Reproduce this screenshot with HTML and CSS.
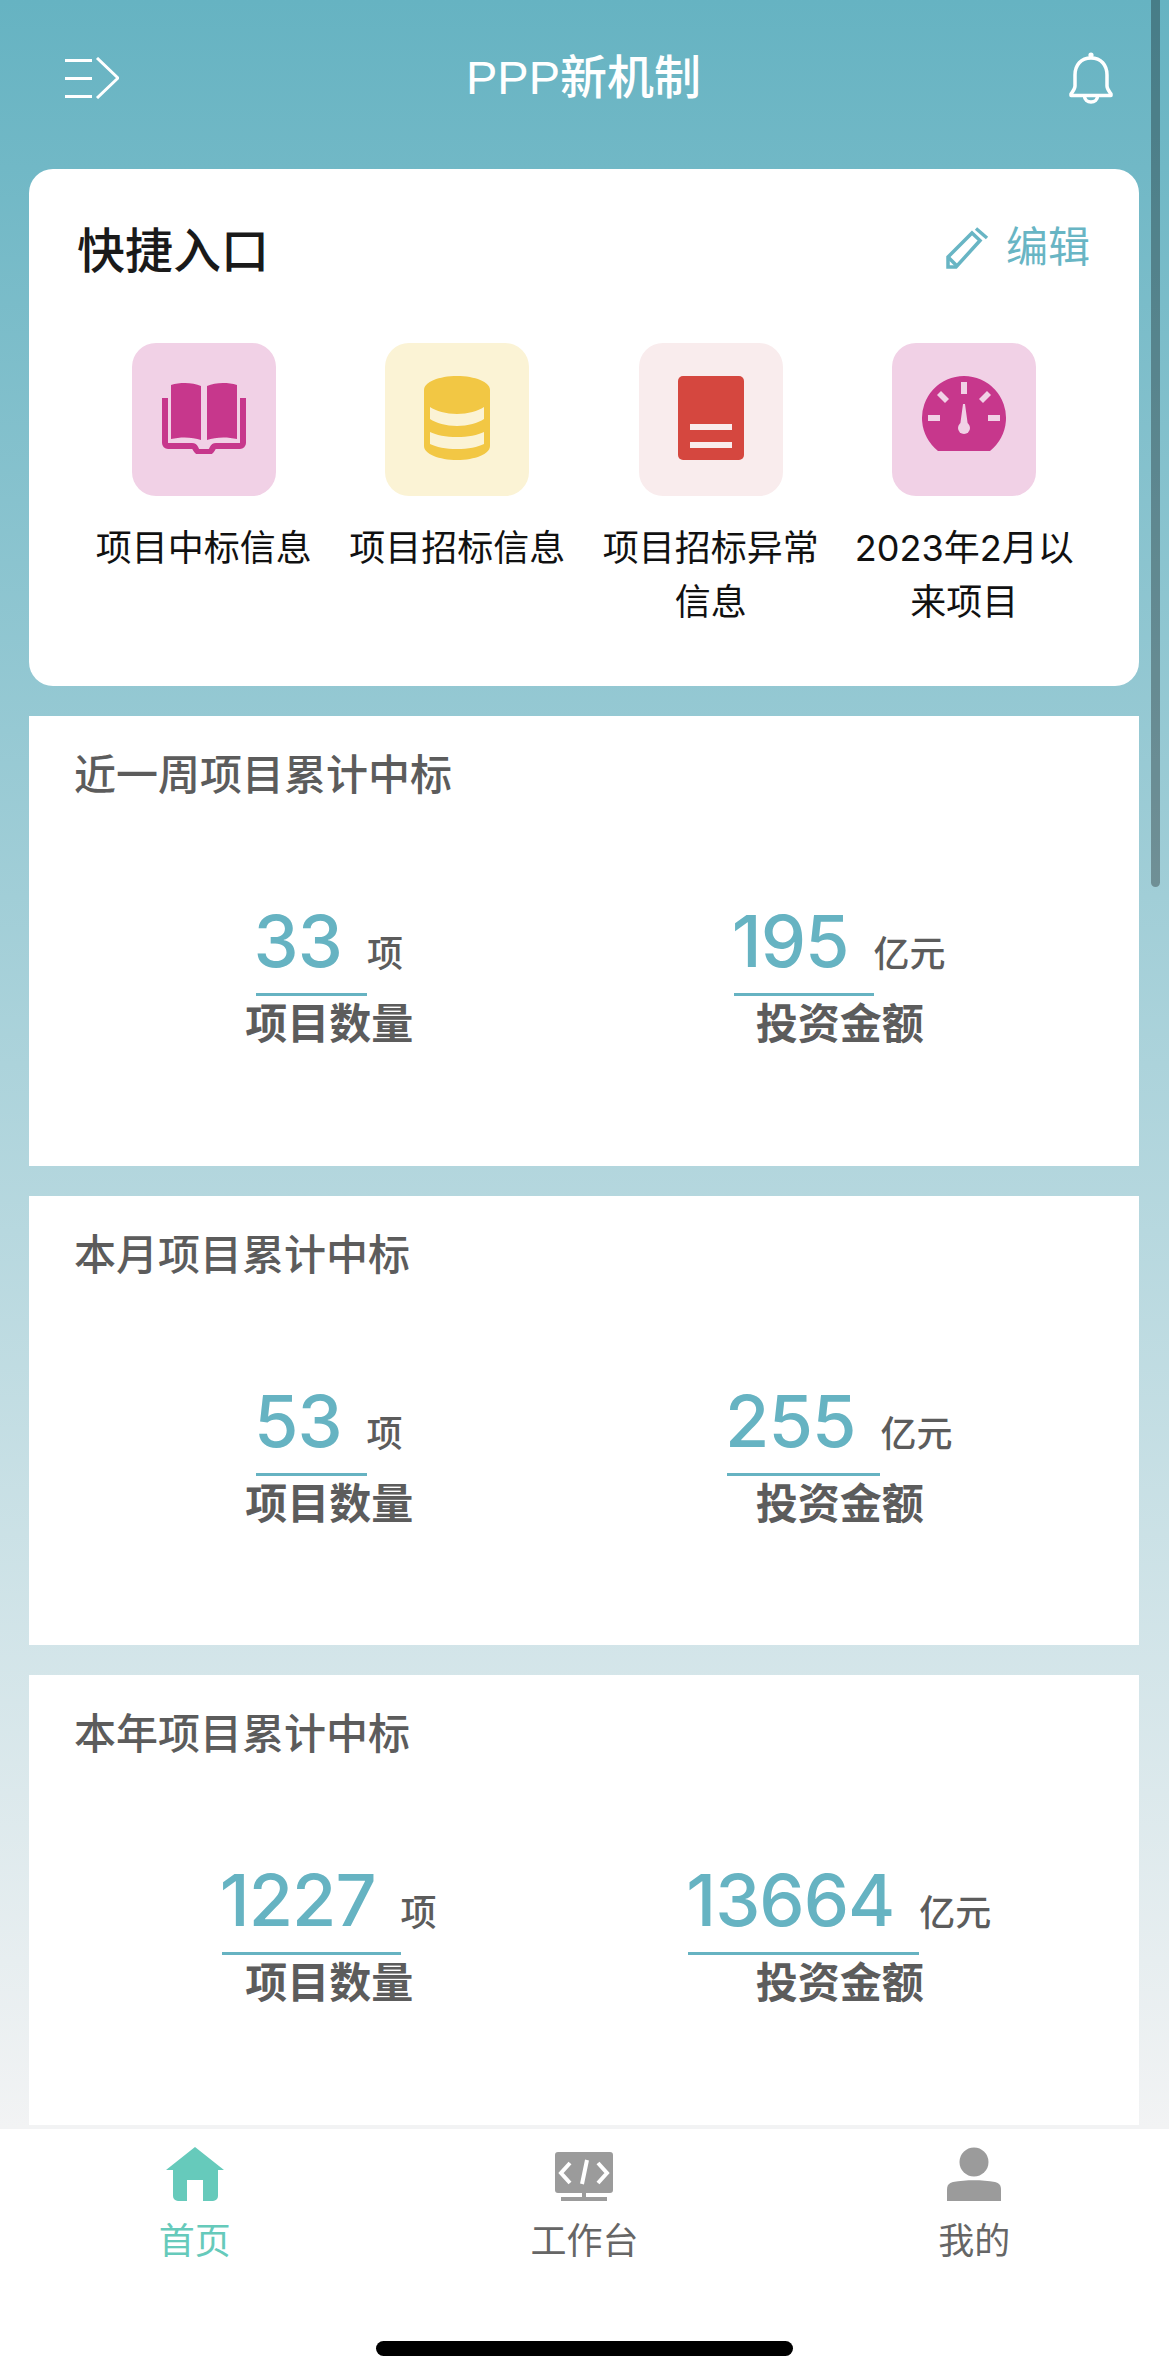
FILE: index.html
```html
<!DOCTYPE html>
<html lang="zh-CN">

<head>
    <meta charset="UTF-8">
    <meta name="viewport" content="width=device-width, initial-scale=1.0">
    <title>PPP新机制</title>
    <link rel="stylesheet" href="styles.css">
</head>

<body>
    <div class="scroll-thumb"></div>

    <!-- Cabeçalho -->
    <header class="top-bar">
        <svg class="menu-icon" viewBox="0 0 54 42" fill="none" stroke="#fff" stroke-width="3">
            <path d="M0 3.5h27M0 21.5h27M0 39.5h27" />
            <path d="M32 1l21 20-21 20" />
        </svg>
        <h1 class="app-title">PPP新机制</h1>
        <svg class="bell-icon" viewBox="0 0 44 52" fill="none" stroke="#fff" stroke-width="3.5" stroke-linejoin="round">
            <circle cx="22" cy="3.2" r="1.6" fill="#fff" stroke-width="2" />
            <path d="M22 6C12 6 6 13 6 23v11c0 3-2 5-4 8v1.500h40V42c-2-3-4-5-4-8V23C38 13 32 6 22 6z" />
            <path d="M15.500 44c0 4 3 6 6.500 6s6.500-2 6.500-6" />
        </svg>
    </header>

    <!-- Conteúdo -->
    <main class="content">
        <section class="quick-card">
            <div class="quick-head">
                <h2 class="quick-title">快捷入口</h2>
                <a class="edit-link">
                    <svg class="edit-icon" viewBox="0 0 43 42" fill="none" stroke="#68b5c4" stroke-width="3.5">
                        <path d="M2 40V30L26 6l8 7.500L10 40z" />
                        <path d="M2 30l9 9" />
                        <path d="M30 1.500L41 11" />
                    </svg>
                    编辑
                </a>
            </div>
            <div class="quick-grid">
                <a class="quick-item">
                    <span class="tile tile-pink">
                        <svg width="84" height="72" viewBox="0 0 84 72" fill="#c7378c">
                            <path d="M9 3c10-3 22-2.500 30 1v54c-8-3-20-3.500-30-1z" />
                            <path d="M75 3c-10-3-22-2.500-30 1v54c8-3 20-3.500 30-1z" />
                            <path d="M3 16v45a3 3 0 0 0 3 3h24c3 0 3 1.500 4 3.500s2 2.500 4 2.500h8c2 0 3-.5 4-2.500s1-3.500 4-3.500h24a3 3 0 0 0 3-3V16" fill="none" stroke="#c7378c" stroke-width="6" />
                        </svg>
                    </span>
                    <span class="quick-label">项目中标信息</span>
                </a>
                <a class="quick-item">
                    <span class="tile tile-yellow">
                        <svg width="66" height="84" viewBox="0 0 66 84">
                            <path fill="#f2c744" d="M0 14C0 6 15 0 33 0s33 6 33 14v56c0 8-15 14-33 14S0 78 0 70z" />
                            <path fill="#fbf3d5" d="M6 31c6 4 16 7 27 7s21-3 27-7v12c-6 4-16 7-27 7S12 47 6 43z" />
                            <path fill="#fbf3d5" d="M6 56c6 3 16 5 27 5s21-2 27-5v12c-6 3-16 5-27 5S12 71 6 68z" />
                        </svg>
                    </span>
                    <span class="quick-label">项目招标信息</span>
                </a>
                <a class="quick-item">
                    <span class="tile tile-red">
                        <svg width="66" height="84" viewBox="0 0 66 84">
                            <rect width="66" height="84" rx="5" fill="#d5473f" />
                            <path fill="#f9eced" d="M12 48h42v6H12zM12 66h42v6H12z" />
                        </svg>
                    </span>
                    <span class="quick-label">项目招标异常信息</span>
                </a>
                <a class="quick-item">
                    <span class="tile tile-pink">
                        <svg width="84" height="84" viewBox="0 0 84 84">
                            <path fill="#c7378c" d="M16 75A42 42 0 1 1 68 75z" />
                            <path fill="#f1d1e6" d="M39 6h6v12h-6zM6 39h12v6H6zM66 39h12v6H66zM41 28h2l3 22h-8z" />
                            <path fill="#f1d1e6" d="M19 15l-4 4 8 8 4-4zM65 15l4 4-8 8-4-4z" />
                            <circle cx="42" cy="52" r="6" fill="#f1d1e6" />
                        </svg>
                    </span>
                    <span class="quick-label">2023年2月以来项目</span>
                </a>
            </div>
        </section>

        <section class="stat-card">
            <h3 class="stat-title">近一周项目累计中标</h3>
            <div class="stat-row">
                <div class="stat">
                    <div class="stat-value"><span class="num">33</span><span class="unit">项</span></div>
                    <div class="stat-label">项目数量</div>
                </div>
                <div class="stat">
                    <div class="stat-value"><span class="num">195</span><span class="unit">亿元</span></div>
                    <div class="stat-label">投资金额</div>
                </div>
            </div>
        </section>

        <section class="stat-card">
            <h3 class="stat-title">本月项目累计中标</h3>
            <div class="stat-row">
                <div class="stat">
                    <div class="stat-value"><span class="num">53</span><span class="unit">项</span></div>
                    <div class="stat-label">项目数量</div>
                </div>
                <div class="stat">
                    <div class="stat-value"><span class="num">255</span><span class="unit">亿元</span></div>
                    <div class="stat-label">投资金额</div>
                </div>
            </div>
        </section>

        <section class="stat-card">
            <h3 class="stat-title">本年项目累计中标</h3>
            <div class="stat-row">
                <div class="stat">
                    <div class="stat-value"><span class="num">1227</span><span class="unit">项</span></div>
                    <div class="stat-label">项目数量</div>
                </div>
                <div class="stat">
                    <div class="stat-value"><span class="num">13664</span><span class="unit">亿元</span></div>
                    <div class="stat-label">投资金额</div>
                </div>
            </div>
        </section>
    </main>

    <!-- Rodapé -->
    <footer class="tab-bar">
        <nav class="tabs">
            <a class="tab active">
                <svg class="tab-icon" width="58" height="54" viewBox="0 0 58 54">
                    <path fill="#66cabb" d="M29 0l29 23h-6v26a5 5 0 0 1-5 5H37V33H21v21H12a5 5 0 0 1-5-5V23H0z" />
                </svg>
                首页
            </a>
            <a class="tab">
                <svg class="tab-icon" width="58" height="54" viewBox="0 0 58 54">
                    <path fill="#9b9b9b" d="M3 5h52a3 3 0 0 1 3 3v35a3 3 0 0 1-3 3H31v4h21v4H6v-4h21v-4H3a3 3 0 0 1-3-3V8a3 3 0 0 1 3-3z" />
                    <path fill="none" stroke="#fff" stroke-width="4" d="M15 16l-9 10 9 10M43 16l9 10-9 10M32 13l-5 24" />
                </svg>
                工作台
            </a>
            <a class="tab">
                <svg class="tab-icon" width="58" height="54" viewBox="0 0 58 54">
                    <circle cx="29" cy="15" r="14.500" fill="#9b9b9b" />
                    <path fill="#9b9b9b" d="M2 43c0-5 2-7 6-8 13-2.500 29-2.500 42 0 4 1 6 3 6 8v11H2z" />
                </svg>
                我的
            </a>
        </nav>
        <div class="home-indicator"></div>
    </footer>
</body>

</html>
```

FILE: styles.css
```css
/* Reset básico */
* {
    margin: 0;
    padding: 0;
    box-sizing: border-box;
    font-family: "Liberation Sans", "Noto Sans CJK SC", sans-serif;
}

:root {
    --teal: #66b3c2;
    --tab-green: #66cabb;
    --text-dark: #1a1a1a;
    --text-gray: #5c5c5c;
}

html,
body {
    height: 2379px;
    overflow: hidden;
}

body {
    position: relative;
    display: flex;
    flex-direction: column;
    background: linear-gradient(180deg, #66b3c2 0, #f2f3f4 2128px);
}

.scroll-thumb {
    position: absolute;
    top: -8px;
    right: 9px;
    width: 9px;
    height: 895px;
    background-color: rgba(0, 0, 0, 0.3);
    border-radius: 5px;
}

/* Cabeçalho */
.top-bar {
    height: 169px;
    padding: 52px 56px 0 65px;
    display: flex;
    justify-content: space-between;
    align-items: flex-start;
    position: relative;
}

.menu-icon {
    width: 54px;
    height: 42px;
    margin-top: 5px;
}

.bell-icon {
    width: 44px;
    height: 52px;
}

.app-title {
    position: absolute;
    left: 0;
    right: 2px;
    top: 50px;
    text-align: center;
    color: #fff;
    font-size: 47px;
    line-height: 56px;
    font-weight: 500;
}

/* Conteúdo Principal */
.content {
    flex: 1;
    padding: 0 30px 0 29px;
    display: flex;
    flex-direction: column;
    gap: 30px;
}

.quick-card {
    height: 517px;
    background-color: #fff;
    border-radius: 24px;
    padding: 48px 48px 0;
}

.quick-head {
    display: flex;
    justify-content: space-between;
    align-items: flex-start;
    height: 126px;
}

.quick-title {
    font-size: 48px;
    line-height: 70px;
    font-weight: 500;
    color: var(--text-dark);
}

.edit-link {
    display: flex;
    align-items: center;
    gap: 17px;
    font-size: 42px;
    line-height: 62px;
    color: #68b5c4;
    margin-right: 1px;
}

.edit-icon {
    width: 43px;
    height: 42px;
}

.quick-grid {
    display: grid;
    grid-template-columns: repeat(4, 1fr);
}

.quick-item {
    display: flex;
    flex-direction: column;
    align-items: center;
    padding: 0 10px;
}

.tile {
    width: 144px;
    height: 153px;
    border-radius: 24px;
    padding-bottom: 3px;
    display: flex;
    align-items: center;
    justify-content: center;
}

.tile-pink {
    background-color: #f1d1e6;
}

.tile-yellow {
    background-color: #fbf3d5;
}

.tile-red {
    background-color: #f9eced;
}

.quick-label {
    margin-top: 25px;
    font-family: Inter, "Noto Sans CJK SC", sans-serif;
    font-size: 36px;
    line-height: 54px;
    text-align: center;
    color: #111;
}

/* Cartões de números */
.stat-card {
    height: 449.7px;
    flex: none;
    background-color: #fff;
    padding: 31px 44px 0 45px;
}

.stat-title {
    font-size: 42px;
    line-height: 58px;
    font-weight: 500;
    color: var(--text-gray);
}

.stat-row {
    display: grid;
    grid-template-columns: 1fr 1fr;
    margin-top: 91px;
}

.stat {
    display: flex;
    flex-direction: column;
    align-items: center;
}

.stat-value {
    display: flex;
    align-items: baseline;
}

.num {
    font-family: Inter, "Liberation Sans", sans-serif;
    font-size: 72px;
    line-height: 90px;
    font-weight: 500;
    letter-spacing: -1px;
    text-indent: -2px;
    color: var(--teal);
    padding: 0 25px 7px 0;
    border-bottom: 3px solid var(--teal);
}

.unit {
    font-size: 36px;
    font-weight: 500;
    color: var(--text-gray);
}

.stat-label {
    font-size: 42px;
    line-height: 58px;
    font-weight: 600;
    color: var(--text-gray);
}

/* Rodapé */
.tab-bar {
    height: 251px;
    flex: none;
    background-color: #fff;
    border-top: 1px solid #f2f3f4;
    position: relative;
}

.tabs {
    display: grid;
    grid-template-columns: repeat(3, 1fr);
    padding-top: 18px;
}

.tab {
    display: flex;
    flex-direction: column;
    align-items: center;
    font-size: 36px;
    line-height: 50px;
    color: #666;
}

.tab.active {
    color: var(--tab-green);
}

.tab-icon {
    margin-bottom: 16px;
}

.home-indicator {
    position: absolute;
    left: 376px;
    top: 212px;
    width: 417px;
    height: 15px;
    background-color: #000;
    border-radius: 8px;
}
```
